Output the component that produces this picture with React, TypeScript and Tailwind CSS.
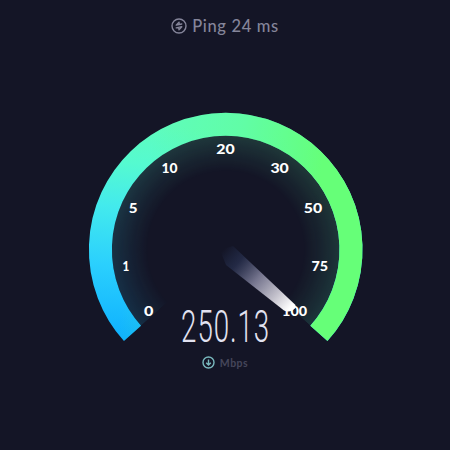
import { memo } from "react";

type Tick = {
    label: string;
    x: number;
    y: number;
    width: number;
}

const TICKS: Tick[] = [
    { label: "0", x: 148.8, y: 315.5, width: 9.4 },
    { label: "1", x: 125.8, y: 270.8, width: 6.8 },
    { label: "5", x: 133.2, y: 213.3, width: 8.8 },
    { label: "10", x: 169.6, y: 172.5, width: 16 },
    { label: "20", x: 225.4, y: 153.5, width: 18.4 },
    { label: "30", x: 279.6, y: 172.5, width: 18.4 },
    { label: "50", x: 313, y: 213.3, width: 18.4 },
    { label: "75", x: 319.8, y: 270.8, width: 16.6 },
    { label: "100", x: 294.6, y: 315.5, width: 25 },
];

const ARC = "M132.5 333.4A125.3 125.3 0 1 1 318.9 333.4";
const GLOW_ARC = "M156.2 312.1A93.5 93.5 0 1 1 295.2 312.1";

function PingIcon() {
    return (
        <svg className="size-4" viewBox="0 0 16 16" fill="none" stroke="currentColor" strokeLinecap="round" strokeLinejoin="round">
            <circle cx="8" cy="8" r="7" strokeWidth="1.4" />
            <path d="M10.8 6L5.2 7.2L8 4.1L8.3 6.4M5.2 9.9L10.8 8.7L8 11.9L7.7 9.5" strokeWidth="1.3" />
        </svg>
    )
}

function DownloadIcon() {
    return (
        <svg className="size-[13px]" viewBox="0 0 13 13" fill="none" stroke="currentColor" strokeWidth="1.4">
            <circle cx="6.5" cy="6.5" r="5.5" />
            <path d="M6.5 3.6V9M4.2 6.8L6.5 9.1L8.8 6.8" />
        </svg>
    )
}

/**
 * Speed dial: coloured arc, inner glow, scale labels, needle and current value.
 */
function Gauge({ value }: { value: string }) {
    return (
        <svg className="block h-[250px] w-full" viewBox="0 103 450 250">
            <defs>
                <linearGradient id="arc_cool" gradientUnits="userSpaceOnUse" x1="0" y1="335" x2="20" y2="113">
                    <stop offset="0" stopColor="#0caeff" />
                    <stop offset="0.36" stopColor="#2bd0fd" />
                    <stop offset="0.62" stopColor="#43eaed" />
                    <stop offset="0.82" stopColor="#55fad0" />
                    <stop offset="1" stopColor="#5ffcbd" />
                </linearGradient>
                <linearGradient id="arc_green" gradientUnits="userSpaceOnUse" x1="150" y1="150" x2="320" y2="180">
                    <stop offset="0" stopColor="#64ff7c" stopOpacity="0" />
                    <stop offset="0.5" stopColor="#64ff7c" stopOpacity="0.35" />
                    <stop offset="1" stopColor="#66ff78" />
                </linearGradient>
                <radialGradient id="glow_fade" gradientUnits="userSpaceOnUse" cx="225.7" cy="249.4" r="114">
                    <stop offset="0.68" stopColor="#fff" stopOpacity="0" />
                    <stop offset="0.84" stopColor="#fff" stopOpacity="0.07" />
                    <stop offset="1" stopColor="#fff" stopOpacity="0.15" />
                </radialGradient>
                <mask id="glow_mask" maskUnits="userSpaceOnUse" x="0" y="103" width="450" height="250">
                    <path d={GLOW_ARC} fill="none" stroke="url(#glow_fade)" strokeWidth="41" />
                </mask>
                <linearGradient id="needle" gradientUnits="userSpaceOnUse" x1="225" y1="248" x2="291" y2="307">
                    <stop offset="0" stopColor="#263457" stopOpacity="0" />
                    <stop offset="0.22" stopColor="#28304f" stopOpacity="0.75" />
                    <stop offset="0.5" stopColor="#74748d" />
                    <stop offset="0.78" stopColor="#c1bfca" />
                    <stop offset="1" stopColor="#ffffff" />
                </linearGradient>
            </defs>

            <g mask="url(#glow_mask)" fill="none" strokeWidth="41">
                <path d={GLOW_ARC} stroke="url(#arc_cool)" />
                <path d={GLOW_ARC} stroke="url(#arc_green)" strokeOpacity="0.6" />
            </g>
            <g fill="none" strokeWidth="23">
                <path d={ARC} stroke="url(#arc_cool)" />
                <path d={ARC} stroke="url(#arc_green)" />
            </g>

            {TICKS.map((tick) => (
                <text
                    key={tick.label}
                    x={tick.x}
                    y={tick.y}
                    textAnchor="middle"
                    textLength={tick.width}
                    lengthAdjust="spacingAndGlyphs"
                    className="fill-white font-['Lato',sans-serif] text-[13.5px] font-black"
                >
                    {tick.label}
                </text>
            ))}

            <path d="M220 250L233 246L295.5 305Q296 308.5 292 310.5Q288 312.5 284 310.5L226 265Z" fill="url(#needle)" />

            <text
                x="225.6"
                y="341.8"
                textAnchor="middle"
                textLength="89"
                lengthAdjust="spacingAndGlyphs"
                className="fill-[#e2e2f0] font-['Roboto',sans-serif] text-[45px] font-light tracking-[1.5px]"
            >
                {value}
            </text>
        </svg>
    )
}

const MemoizedGauge = memo(Gauge);

export default function App() {
    return (
        <main className="flex h-[450px] w-[450px] flex-col overflow-hidden bg-[#141526] font-['Lato',sans-serif]">
            <header className="flex h-[103px] items-start justify-center gap-[5px] pt-[18px] text-[#85859a]">
                <PingIcon />
                <span className="-mt-px text-[16.5px] leading-[18px] font-medium tracking-[0.65px]">Ping 24 ms</span>
            </header>
            <MemoizedGauge value="250.13" />
            <footer className="flex items-center justify-center gap-[5px] pt-[3px]">
                <span className="text-[#79b8bd]"><DownloadIcon /></span>
                <span className="text-[10.5px] leading-3 font-bold tracking-[0.5px] text-[#45465a]">Mbps</span>
            </footer>
        </main>
    )
}
